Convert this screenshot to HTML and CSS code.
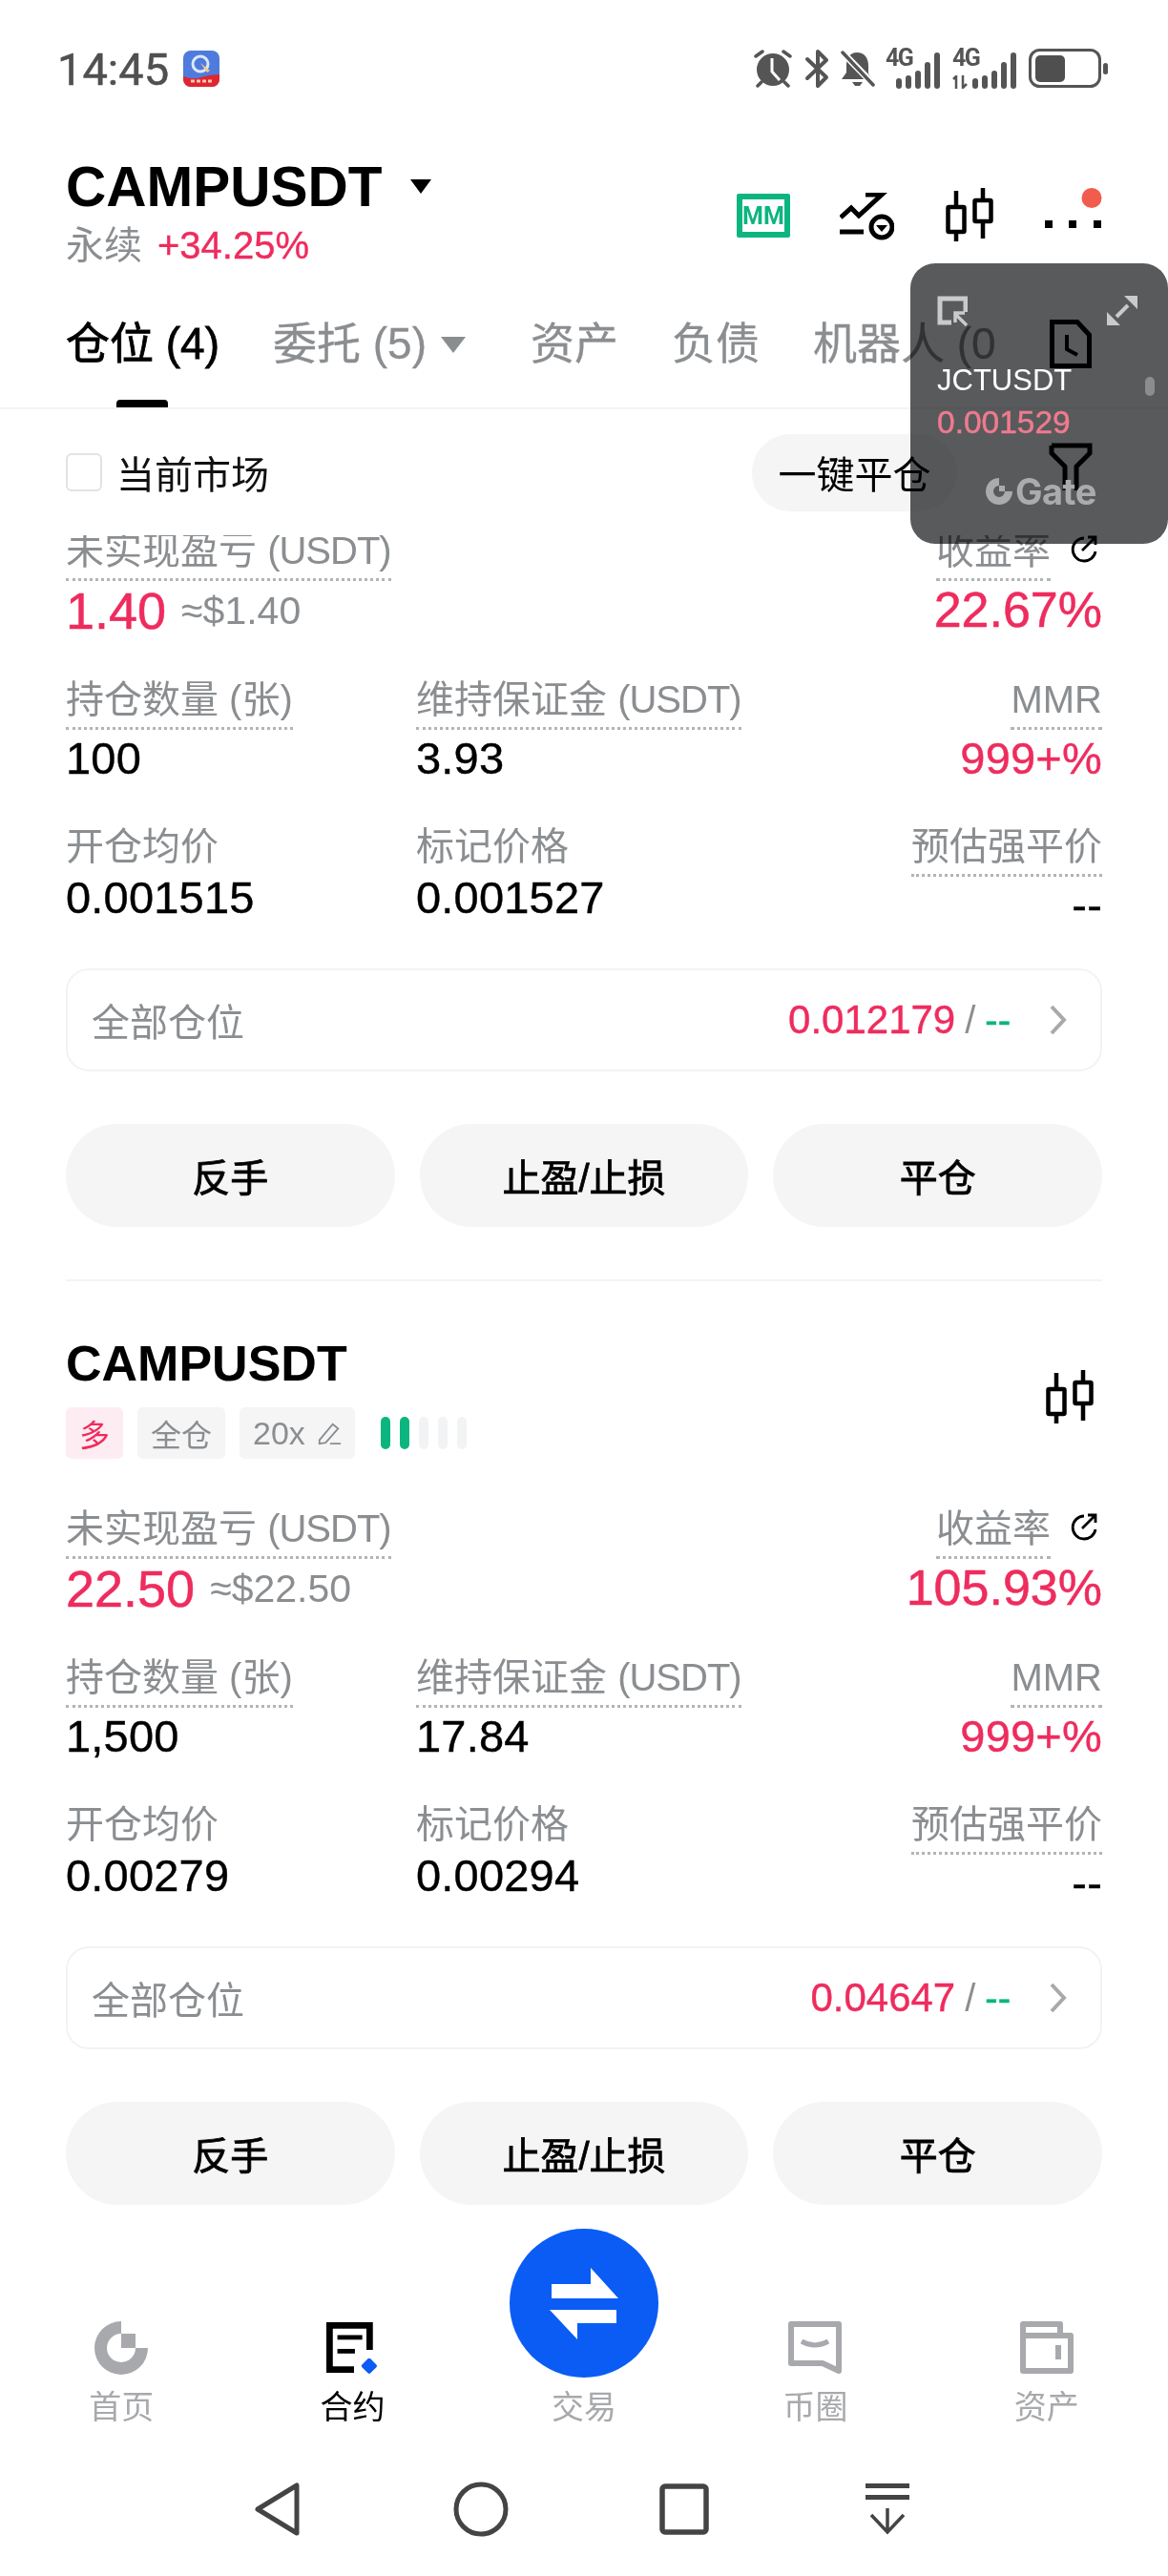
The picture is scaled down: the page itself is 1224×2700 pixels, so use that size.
FILE: index.html
```html
<!DOCTYPE html>
<html lang="en">
<head>
    <meta charset="UTF-8">
    <meta name="viewport" content="width=device-width, initial-scale=1.0">
    <title>CAMPUSDT</title>
    <link rel="stylesheet" href="styles.css">
</head>
<body>
<div class="status-bar">
    <span class="clock">14:45</span>
    <svg class="app-badge" viewBox="0 0 38 38">
        <defs><clipPath id="badgeClip"><rect width="38" height="38" rx="8"/></clipPath></defs>
        <g clip-path="url(#badgeClip)">
            <rect width="38" height="38" fill="#4f7bdc"/>
            <circle cx="18" cy="14" r="8" fill="none" stroke="#dbe7fb" stroke-width="3"/>
            <path d="M18 13l10 8-3 2z" fill="#f0c98a"/>
            <path d="M0 27q10 4 19 1t19-3v13H0z" fill="#e0252f"/>
            <path d="M8 32h22" stroke="#f6c9b0" stroke-width="3" stroke-dasharray="4 2"/>
        </g>
    </svg>
    <div class="status-icons">
        <svg class="st-alarm" viewBox="0 0 42 40">
            <path d="M3 7l7-5M39 7l-7-5M9 34l-4 4M33 34l4 4" stroke="#555" stroke-width="3.5" stroke-linecap="round"/>
            <circle cx="21" cy="21" r="17" fill="#555"/>
            <path d="M20 9v14l8 9" fill="none" stroke="#fff" stroke-width="3"/>
        </svg>
        <svg class="st-bt" viewBox="0 0 26 42">
            <path d="M3 11l20 19-9 9V3l9 9L3 31" fill="none" stroke="#555" stroke-width="4" stroke-linejoin="round" stroke-linecap="round"/>
        </svg>
        <svg class="st-bell" viewBox="0 0 36 40">
            <path d="M17 3c8 0 12 6 12 14v8l4 6H1l5-7v-8C6 9 10 3 17 3z" fill="#555"/>
            <path d="M12 34h11l-3 4h-5z" fill="#555"/>
            <path d="M1 2l33 34" stroke="#fff" stroke-width="7"/>
            <path d="M2 3l32 34" stroke="#555" stroke-width="3.5" stroke-linecap="round"/>
        </svg>
        <div class="signal">
            <span class="signal-label">4G</span>
            <div class="bars">
                <i class="b1"></i><i class="b2"></i><i class="b3"></i><i class="b4"></i><i class="b5"></i>
            </div>
        </div>
        <div class="signal signal-data">
            <span class="signal-label">4G</span>
            <svg class="data-arrows" viewBox="0 0 18 14">
                <path d="M4 14V1L1 4M11 0v13l4-4" fill="none" stroke="#555" stroke-width="2.500"/>
            </svg>
            <div class="bars">
                <i class="b1"></i><i class="b2"></i><i class="b3"></i><i class="b4"></i><i class="b5"></i>
            </div>
        </div>
        <svg class="st-battery" viewBox="0 0 84 42">
            <rect x="1.5" y="1.5" width="73" height="38" rx="10" fill="none" stroke="#555" stroke-width="3"/>
            <rect x="7" y="7" width="31" height="28" rx="5" fill="#4f4f4f"/>
            <rect x="78" y="15" width="5" height="12" rx="2.5" fill="#555"/>
        </svg>
    </div>
</div>

<div class="market-head">
    <div>
        <div class="market-name">CAMPUSDT<span class="market-caret"></span></div>
        <div class="market-sub"><span class="muted">永续</span><span class="red">+34.25%</span></div>
    </div>
    <div class="head-icons">
        <svg class="ic-mm" viewBox="0 0 56 46">
            <rect width="56" height="46" rx="2" fill="#0cb57f"/>
            <rect x="6" y="6" width="44" height="34" fill="#fff"/>
            <text x="28" y="32" text-anchor="middle" class="mm-text">MM</text>
        </svg>
        <svg class="ic-trend" viewBox="0 0 57 50">
            <path d="M1 26l11-10 8 8L44 2H27" fill="none" stroke="#000" stroke-width="5"/>
            <path d="M0 41h25" stroke="#000" stroke-width="5"/>
            <circle cx="44" cy="36" r="11" fill="none" stroke="#000" stroke-width="5"/>
            <path d="M38 34h12l-6 7z" fill="#000"/>
        </svg>
        <svg class="ic-candle" viewBox="0 0 50 56">
            <path d="M11 3v17M11 46v10M39 0v13M39 35v18" stroke="#000" stroke-width="4.5"/>
            <rect x="2.5" y="20" width="17" height="26" rx="1" fill="none" stroke="#000" stroke-width="4.5"/>
            <rect x="30.5" y="13" width="17" height="22" rx="1" fill="none" stroke="#000" stroke-width="4.5"/>
        </svg>
        <svg class="ic-more" viewBox="0 0 60 50">
            <circle cx="49" cy="10.500" r="10.500" fill="#f25c4d"/>
            <path d="M0 34h8v8H0zM25 34h8v8h-8zM51 34h8v8h-8z" fill="#000"/>
        </svg>
    </div>
</div>

<div class="tabs">
    <div class="tab-list">
        <span class="tab tab-active">仓位 (4)</span>
        <span class="tab">委托 (5)<i class="tab-caret"></i></span>
        <span class="tab">资产</span>
        <span class="tab">负债</span>
        <span class="tab">机器人 (0</span>
    </div>
    <svg class="ic-history" viewBox="0 0 44 51">
        <path d="M2.500 2.500H29L41.500 16V48.500H2.500z" fill="none" stroke="#000" stroke-width="5"/>
        <path d="M18 16v15l11 6" fill="none" stroke="#000" stroke-width="4"/>
    </svg>
</div>

<div class="filter-row">
    <span class="check"></span>
    <span class="check-label">当前市场</span>
    <span class="close-all">一键平仓</span>
    <svg class="ic-funnel" viewBox="0 0 46 50">
        <path d="M3 3h40v8L29 25v25M3 3v8l14 14v25" fill="none" stroke="#000" stroke-width="5"/>
    </svg>
</div>

<section class="position position-first">
    <div class="grid">
        <div class="field">
            <span class="label dotted">未实现盈亏 <span class="unit">(USDT)</span></span>
            <div class="pnl"><span class="pnl-num red">1.40</span><span class="pnl-usd">≈$1.40</span></div>
        </div>
        <div class="field field-right span-two">
            <div class="label-row">
                <span class="label dotted">收益率</span>
                <svg class="ic-share" viewBox="0 0 32 32">
                    <path d="M17 4a12 12 0 1 0 12 14" fill="none" stroke="#000" stroke-width="2.800"/>
                    <path d="M15 17L29 3M21 3h8v8" fill="none" stroke="#000" stroke-width="2.800"/>
                </svg>
            </div>
            <div class="rate red">22.67%</div>
        </div>
        <div class="field">
            <span class="label dotted">持仓数量 (张)</span>
            <div class="value">100</div>
        </div>
        <div class="field">
            <span class="label dotted">维持保证金 <span class="unit">(USDT)</span></span>
            <div class="value">3.93</div>
        </div>
        <div class="field field-right">
            <span class="label dotted">MMR</span>
            <div class="value red">999+%</div>
        </div>
        <div class="field">
            <span class="label">开仓均价</span>
            <div class="value">0.001515</div>
        </div>
        <div class="field">
            <span class="label">标记价格</span>
            <div class="value">0.001527</div>
        </div>
        <div class="field field-right">
            <span class="label dotted">预估强平价</span>
            <div class="value">--</div>
        </div>
    </div>
    <div class="all-box">
        <span class="muted">全部仓位</span>
        <span class="all-right">
            <span class="red">0.012179</span><span class="slash">/</span><span class="green">--</span>
            <svg class="ic-chevron" viewBox="0 0 18 32"><path d="M2 2l13 14L2 30" fill="none" stroke="#a8a9ab" stroke-width="4"/></svg>
        </span>
    </div>
    <div class="actions">
        <span class="action">反手</span>
        <span class="action">止盈/止损</span>
        <span class="action">平仓</span>
    </div>
</section>

<div class="divider"></div>

<section class="position">
    <div class="pos-head">
        <div>
            <div class="pos-name">CAMPUSDT</div>
            <div class="tags">
                <span class="tag tag-long">多</span>
                <span class="tag">全仓</span>
                <span class="tag tag-lever">20x
                    <svg class="ic-edit" viewBox="0 0 28 28">
                        <path d="M3 22L18 4l6 5L10 25l-7 1zM15 26h12" fill="none" stroke="#8a8d90" stroke-width="2"/>
                    </svg>
                </span>
                <div class="risk">
                    <i class="risk-on"></i><i class="risk-on"></i><i></i><i></i><i></i>
                </div>
            </div>
        </div>
        <svg class="ic-candle" viewBox="0 0 50 56">
            <path d="M11 3v17M11 46v10M39 0v13M39 35v18" stroke="#000" stroke-width="4.5"/>
            <rect x="2.500" y="20" width="17" height="26" rx="1" fill="none" stroke="#000" stroke-width="4.5"/>
            <rect x="30.500" y="13" width="17" height="22" rx="1" fill="none" stroke="#000" stroke-width="4.5"/>
        </svg>
    </div>
    <div class="grid">
        <div class="field">
            <span class="label dotted">未实现盈亏 <span class="unit">(USDT)</span></span>
            <div class="pnl"><span class="pnl-num red">22.50</span><span class="pnl-usd">≈$22.50</span></div>
        </div>
        <div class="field field-right span-two">
            <div class="label-row">
                <span class="label dotted">收益率</span>
                <svg class="ic-share" viewBox="0 0 32 32">
                    <path d="M17 4a12 12 0 1 0 12 14" fill="none" stroke="#000" stroke-width="2.800"/>
                    <path d="M15 17L29 3M21 3h8v8" fill="none" stroke="#000" stroke-width="2.800"/>
                </svg>
            </div>
            <div class="rate red">105.93%</div>
        </div>
        <div class="field">
            <span class="label dotted">持仓数量 (张)</span>
            <div class="value">1,500</div>
        </div>
        <div class="field">
            <span class="label dotted">维持保证金 <span class="unit">(USDT)</span></span>
            <div class="value">17.84</div>
        </div>
        <div class="field field-right">
            <span class="label dotted">MMR</span>
            <div class="value red">999+%</div>
        </div>
        <div class="field">
            <span class="label">开仓均价</span>
            <div class="value">0.00279</div>
        </div>
        <div class="field">
            <span class="label">标记价格</span>
            <div class="value">0.00294</div>
        </div>
        <div class="field field-right">
            <span class="label dotted">预估强平价</span>
            <div class="value">--</div>
        </div>
    </div>
    <div class="all-box">
        <span class="muted">全部仓位</span>
        <span class="all-right">
            <span class="red">0.04647</span><span class="slash">/</span><span class="green">--</span>
            <svg class="ic-chevron" viewBox="0 0 18 32"><path d="M2 2l13 14L2 30" fill="none" stroke="#a8a9ab" stroke-width="4"/></svg>
        </span>
    </div>
    <div class="actions">
        <span class="action">反手</span>
        <span class="action">止盈/止损</span>
        <span class="action">平仓</span>
    </div>
</section>

<nav class="tabbar">
    <div class="nav-item">
        <svg class="nav-icon" viewBox="0 0 56 56">
            <path d="M28 0A28 28 0 1 0 56 28H43A15 15 0 1 1 28 13z" fill="#a7a9ac"/>
            <rect x="28" y="13" width="15" height="15" fill="#a7a9ac"/>
        </svg>
        <span>首页</span>
    </div>
    <div class="nav-item nav-active">
        <svg class="nav-icon" viewBox="0 0 58 56">
            <path d="M47 30V3.500H3.500V51.500H30" fill="none" stroke="#000" stroke-width="7"/>
            <rect x="12" y="14" width="27" height="5" fill="#000"/>
            <rect x="12" y="29" width="19" height="5" fill="#000"/>
            <rect x="40" y="41" width="13" height="13" rx="2" transform="rotate(45 46.500 47.500)" fill="#0a5cf5"/>
        </svg>
        <span>合约</span>
    </div>
    <div class="nav-item nav-trade">
        <span class="trade-btn">
            <svg viewBox="0 0 156 156">
                <path d="M44 58H85V41L114 73H44zM112 85V99H71V116L42 85z" fill="#fff"/>
            </svg>
        </span>
        <span>交易</span>
    </div>
    <div class="nav-item">
        <svg class="nav-icon" viewBox="0 0 56 56">
            <path d="M3 3H53V52L36 44H3z" fill="none" stroke="#a7a9ac" stroke-width="6" stroke-linejoin="round"/>
            <path d="M14 21Q28 29 42 21" fill="none" stroke="#a7a9ac" stroke-width="5"/>
        </svg>
        <span>币圈</span>
    </div>
    <div class="nav-item">
        <svg class="nav-icon" viewBox="0 0 56 56">
            <path d="M3 3H42V15H53V52H3zM3 15H42" fill="none" stroke="#a7a9ac" stroke-width="6" stroke-linejoin="round"/>
            <rect x="37" y="25" width="6" height="15" fill="#a7a9ac"/>
        </svg>
        <span>资产</span>
    </div>
</nav>

<div class="system-nav">
    <div class="sys-cell">
        <svg width="50" height="58" viewBox="0 0 50 58"><path d="M45 4V54L4 29z" fill="none" stroke="#444" stroke-width="5" stroke-linejoin="round"/></svg>
    </div>
    <div class="sys-cell">
        <svg width="58" height="58" viewBox="0 0 58 58"><circle cx="29" cy="29" r="26" fill="none" stroke="#444" stroke-width="5"/></svg>
    </div>
    <div class="sys-cell">
        <svg width="52" height="54" viewBox="0 0 52 54"><rect x="3" y="3" width="46" height="48" rx="3" fill="none" stroke="#444" stroke-width="5.500"/></svg>
    </div>
    <div class="sys-cell">
        <svg width="46" height="54" viewBox="0 0 46 54">
            <path d="M0 2.500H46M0 14.500H46" stroke="#444" stroke-width="5"/>
            <path d="M23 26V51M6 33L23 51L40 33" fill="none" stroke="#444" stroke-width="3.500"/>
        </svg>
    </div>
</div>

<!-- floating price window -->
<div class="float-shade"></div>
<div class="float-win">
    <div class="float-top">
        <svg class="float-ic" viewBox="0 0 32 32">
            <path d="M30 17V3H3V28H15" fill="none" stroke="#c9caca" stroke-width="5"/>
            <path d="M31 31L20 20M19 28V18H29" fill="none" stroke="#c9caca" stroke-width="3.500"/>
        </svg>
        <svg class="float-ic" viewBox="0 0 32 32">
            <path d="M32 0V14L18 0zM0 31V17L14 31z" fill="#c9caca"/>
            <path d="M10 22L22 10" stroke="#c9caca" stroke-width="4"/>
        </svg>
    </div>
    <div class="float-symbol">JCTUSDT</div>
    <div class="float-price">0.001529</div>
    <div class="float-logo">
        <svg viewBox="0 0 30 30">
            <path d="M15 1A14 14 0 1 0 29 15H21A6 6 0 1 1 15 9z" fill="#aaabac"/>
            <rect x="15" y="9" width="6" height="6" fill="#aaabac"/>
        </svg>
        <span>Gate</span>
    </div>
    <i class="float-pill"></i>
</div>
</body>
</html>
```

FILE: styles.css
```css
* {
    box-sizing: border-box;
}
html, body {
    margin: 0;
    background-color: #fff;
}
body {
    width: 1224px;
    height: 2700px;
    position: relative;
    overflow: hidden;
    font-family: "Liberation Sans", "Noto Sans CJK SC", sans-serif;
    color: #000;
}
svg {
    display: block;
    flex: none;
}
.red { color: #ee2c5e; }
.green { color: #0cb57f; }
.muted { color: #8b8e91; }

/* status bar */
.status-bar {
    height: 144px;
    padding: 0 60px;
    display: flex;
    align-items: center;
}
.clock {
    font-family: Roboto, sans-serif;
    font-size: 47px;
    color: #505050;
    -webkit-text-stroke: 0.5px #505050;
    margin-right: 15px;
}
.app-badge {
    width: 38px;
    height: 38px;
}
.status-icons {
    margin-left: auto;
    margin-right: 2px;
    display: flex;
    align-items: center;
}
.st-alarm { width: 42px; height: 40px; margin-right: 12px; }
.st-bt { width: 26px; height: 42px; margin-right: 12px; }
.st-bell { width: 36px; height: 40px; margin-right: 11px; }
.st-battery { width: 84px; height: 42px; margin-left: 13px; }
.signal {
    position: relative;
    width: 57px;
    height: 42px;
    margin-right: 12px;
    display: flex;
    justify-content: flex-end;
    align-items: flex-end;
}
.signal-data { width: 68px; margin-right: 0; }
.signal-label {
    position: absolute;
    left: 0;
    top: -3px;
    font-family: Roboto, sans-serif;
    font-weight: 700;
    font-size: 25px;
    line-height: 26px;
    letter-spacing: -1.5px;
    color: #555;
}
.signal-data .signal-label { left: 1px; }
.data-arrows {
    position: absolute;
    left: 1px;
    bottom: 0;
    width: 18px;
    height: 14px;
}
.bars {
    display: flex;
    align-items: flex-end;
    gap: 4px;
}
.bars i {
    width: 6px;
    border-radius: 3px;
    background-color: #555;
}
.b1 { height: 11px; }
.b2 { height: 14px; }
.b3 { height: 19px; }
.b4 { height: 28px; }
.b5 { height: 38px; }

/* market header */
.market-head {
    height: 141px;
    padding: 19px 69px 0 69px;
    display: flex;
    justify-content: space-between;
}
.market-name {
    font-weight: 700;
    font-size: 58.500px;
    line-height: 66px;
    display: flex;
    align-items: center;
}
.market-caret {
    width: 0;
    height: 0;
    margin: 0 0 2px 29px;
    border-left: 11px solid transparent;
    border-right: 11px solid transparent;
    border-top: 15px solid #000;
}
.market-sub {
    font-size: 40px;
    line-height: 56px;
    display: flex;
    gap: 16px;
}
.market-sub .red {
    -webkit-text-stroke: 0.4px currentColor;
}
.head-icons {
    display: flex;
    align-items: flex-start;
    padding-top: 34px;
}
.ic-mm { width: 56px; height: 46px; margin: 6px 52px 0 0; }
.mm-text {
    font-family: Roboto, sans-serif;
    font-weight: 700;
    font-size: 25px;
    fill: #0cb57f;
}
.ic-trend { width: 57px; height: 50px; margin: 5px 54px 0 0; }
.ic-candle { width: 50px; height: 56px; }
.ic-more { width: 60px; height: 50px; margin-left: 54px; }

/* tabs */
.tabs {
    height: 144px;
    padding: 47px 80px 0 69px;
    border-bottom: 2px solid #f2f3f4;
    display: flex;
    justify-content: space-between;
}
.tab-list {
    height: 95px;
    display: flex;
    gap: 56px;
    white-space: nowrap;
}
.tab {
    position: relative;
    height: 95px;
    font-size: 46px;
    line-height: 56px;
    color: #8b8e91;
    -webkit-text-stroke: 0.3px currentColor;
    display: flex;
}
.tab-active {
    color: #000;
    -webkit-text-stroke: 0.8px #000;
}
.tab-active::after {
    content: "";
    position: absolute;
    left: 53px;
    bottom: 0;
    width: 54px;
    height: 8px;
    border-radius: 4px 4px 0 0;
    background-color: #000;
}
.tab-caret {
    width: 0;
    height: 0;
    margin: 21px 12px 0 15px;
    border-left: 13px solid transparent;
    border-right: 13px solid transparent;
    border-top: 17px solid #8b8e91;
}
.ic-history { width: 44px; height: 51px; margin-top: 3px; }

/* filter row, stays above the scrolled list */
.filter-row {
    position: relative;
    z-index: 1;
    height: 132px;
    padding: 0 79px 0 69px;
    background-color: #fff;
    display: flex;
    align-items: center;
}
.check {
    width: 38px;
    height: 40px;
    border: 2px solid #e1e3e4;
    border-radius: 6px;
}
.check-label {
    font-size: 40px;
    margin-left: 15px;
    color: #111;
}
.close-all {
    margin-left: auto;
    width: 215px;
    height: 81px;
    border-radius: 41px;
    background-color: #f5f5f6;
    font-size: 40px;
    display: flex;
    align-items: center;
    justify-content: center;
}
.ic-funnel { width: 46px; height: 50px; margin: -13px 0 0 96px; }

/* position card */
.position {
    padding: 0 69px;
}
.position-first {
    margin-top: -8px;
}
.pos-head {
    display: flex;
    justify-content: space-between;
    align-items: flex-start;
    padding-top: 53px;
    margin-bottom: 49px;
}
.pos-head .ic-candle { margin: 40px 9px 0 0; }
.pos-name {
    font-weight: 700;
    font-size: 52px;
    line-height: 66px;
}
.tags {
    margin-top: 13px;
    display: flex;
    align-items: center;
    gap: 15px;
}
.tag {
    height: 54px;
    padding: 0 14px;
    border-radius: 6px;
    background-color: #f5f5f6;
    color: #8b8e91;
    font-size: 32px;
    display: flex;
    align-items: center;
    gap: 12px;
}
.tag-long {
    background-color: #fdecf1;
    color: #ee2c5e;
}
.tag-lever {
    font-size: 34px;
}
.ic-edit { width: 26px; height: 26px; }
.risk {
    margin-left: 12px;
    display: flex;
    gap: 10px;
}
.risk i {
    width: 10px;
    height: 34px;
    border-radius: 5px;
    background-color: #f2f3f4;
}
.risk .risk-on {
    background-color: #0cb57f;
}
.grid {
    display: grid;
    grid-template-columns: 367px 1fr auto;
    row-gap: 38px;
}
.field {
    display: flex;
    flex-direction: column;
    align-items: flex-start;
}
.field-right {
    align-items: flex-end;
}
.span-two {
    grid-column: 2 / 4;
}
.label {
    font-size: 40px;
    line-height: 48px;
    color: #8b8e91;
    white-space: nowrap;
}
.unit {
    letter-spacing: -1px;
}
.dotted {
    height: 56px;
    padding-bottom: 6px;
    border-bottom: 3px dotted #b2b4b6;
}
.label-row {
    display: flex;
    align-items: flex-start;
    gap: 18px;
}
.ic-share { width: 32px; height: 32px; margin: 7px 4px 0 0; }
.value {
    font-size: 47px;
    line-height: 60px;
    letter-spacing: 0.2px;
    -webkit-text-stroke: 0.4px currentColor;
    white-space: nowrap;
}
.pnl {
    height: 62px;
    display: flex;
    align-items: center;
    gap: 16px;
}
.pnl-num {
    font-size: 54px;
    -webkit-text-stroke: 0.5px currentColor;
}
.pnl-usd {
    font-size: 41px;
    color: #8b8e91;
}
.rate {
    font-size: 52px;
    line-height: 60px;
    -webkit-text-stroke: 0.5px currentColor;
}
.all-box {
    height: 108px;
    margin-top: 36px;
    padding: 0 35px 0 25px;
    border: 2px solid #f2f3f4;
    border-radius: 24px;
    font-size: 40px;
    display: flex;
    align-items: center;
    justify-content: space-between;
}
.all-right {
    display: flex;
    align-items: center;
}
.all-right .red {
    font-size: 42px;
    -webkit-text-stroke: 0.4px currentColor;
}
.slash {
    margin: 0 10px;
    color: #8b8e91;
}
.all-right .green {
    font-size: 40px;
    -webkit-text-stroke: 0.6px currentColor;
}
.ic-chevron { width: 18px; height: 32px; margin-left: 41px; }
.actions {
    margin-top: 55px;
    display: flex;
    gap: 26px;
}
.action {
    flex: 1;
    height: 108px;
    border-radius: 54px;
    background-color: #f5f5f6;
    font-size: 40px;
    -webkit-text-stroke: 0.8px #000;
    display: flex;
    align-items: center;
    justify-content: center;
}
.divider {
    height: 2px;
    margin: 55px 69px 0;
    background-color: #f2f3f4;
}

/* bottom tabs */
.tabbar {
    margin-top: 25px;
    padding: 0 6px;
    display: grid;
    grid-template-columns: repeat(5, 1fr);
    align-items: end;
}
.nav-item {
    display: flex;
    flex-direction: column;
    align-items: center;
    font-size: 34px;
    line-height: 48px;
    color: #a7a9ac;
}
.nav-active {
    color: #000;
}
.nav-icon {
    width: 56px;
    height: 56px;
    margin-bottom: 10px;
}
.trade-btn {
    width: 156px;
    height: 156px;
    margin-bottom: 7px;
    border-radius: 50%;
    background-color: #0a5cf5;
}
.system-nav {
    padding: 53px 4px 0 0;
    display: flex;
    justify-content: center;
}
.sys-cell {
    width: 213px;
    height: 60px;
    display: flex;
    align-items: center;
    justify-content: center;
}

/* floating window: the shade darkens whatever sits below it */
.float-shade {
    position: absolute;
    z-index: 2;
    left: 954px;
    top: 276px;
    width: 270px;
    height: 294px;
    border-radius: 26px;
    background-color: #585a5b;
    mix-blend-mode: multiply;
}
.float-win {
    position: absolute;
    z-index: 3;
    left: 954px;
    top: 276px;
    width: 270px;
    height: 294px;
    padding: 34px 32px 0 28px;
}
.float-top {
    display: flex;
    justify-content: space-between;
}
.float-ic { width: 32px; height: 32px; }
.float-symbol {
    margin-top: 36px;
    font-size: 31px;
    line-height: 42px;
    color: #fff;
}
.float-price {
    margin-top: 2px;
    font-size: 33.500px;
    line-height: 42px;
    color: #f07a90;
    -webkit-text-stroke: 0.5px #f07a90;
}
.float-logo {
    margin: 31px 0 0 50px;
    display: flex;
    align-items: center;
    gap: 2px;
    font-family: Inter, sans-serif;
    font-weight: 700;
    font-size: 38px;
    line-height: 40px;
    letter-spacing: -0.5px;
    color: #aaabac;
}
.float-logo svg { width: 30px; height: 30px; }
.float-pill {
    position: absolute;
    left: 246px;
    top: 119px;
    width: 10px;
    height: 20px;
    border-radius: 5px;
    background-color: #8b8c8d;
}
```
